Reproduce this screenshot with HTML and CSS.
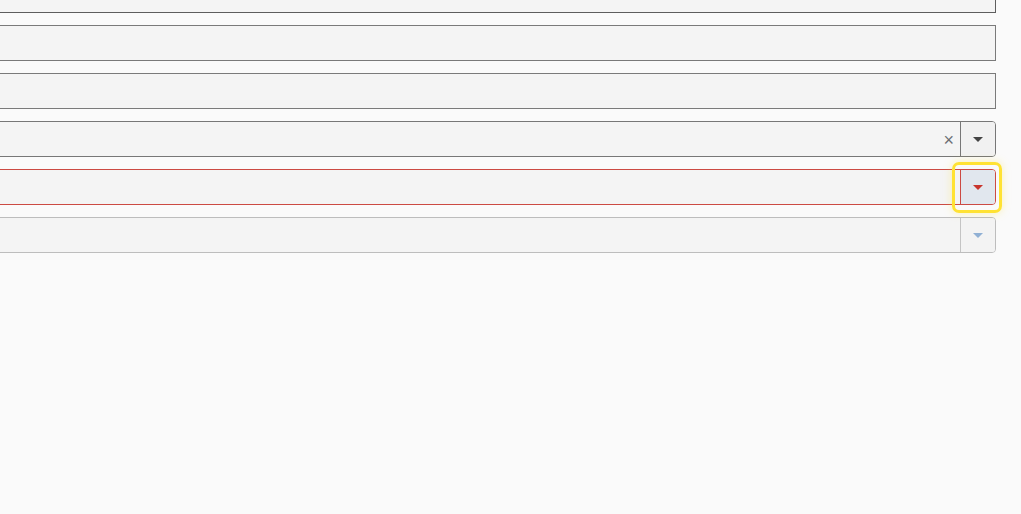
FILE: index.html
```html
<!DOCTYPE html>
<html lang="en">
<head>
  <meta charset="UTF-8">
  <title>Form fields</title>
  <link rel="stylesheet" href="styles.css">
</head>
<body>
  <div class="form">
    <div class="field dark"></div>
    <div class="field"></div>
    <div class="field"></div>

    <div class="combo">
      <div class="combo-input">
        <span class="clear">×</span>
      </div>
      <div class="combo-btn"><span class="arrow"></span></div>
    </div>

    <div class="combo error">
      <div class="combo-input"></div>
      <div class="combo-btn focused"><span class="arrow"></span></div>
    </div>

    <div class="combo disabled">
      <div class="combo-input"></div>
      <div class="combo-btn"><span class="arrow"></span></div>
    </div>
  </div>
</body>
</html>
```

FILE: styles.css
```css
body {
  font-family: "Liberation Sans", Arial, sans-serif;
  background: #fafafa;
  margin: 0;
  overflow: hidden;
}
.form {
  display: flex;
  flex-direction: column;
  gap: 12px;
  margin: -23px 25px 0 -20px;
}
.field {
  height: 36px;
  box-sizing: border-box;
  background: #f4f4f4;
  border: 1px solid #7a7a7a;
}
.field.dark {
  border-color: #5e5e5e;
}
.combo {
  display: flex;
  height: 36px;
  box-sizing: border-box;
  background: #f4f4f4;
  border: 1px solid #777;
  border-radius: 0 4px 4px 0;
}
.combo-input {
  flex: 1;
  display: flex;
  align-items: center;
  justify-content: flex-end;
  padding-right: 6px;
}
.clear {
  color: #6b6f75;
  font-size: 18px;
  line-height: 1;
  margin-top: 2px;
}
.combo-btn {
  position: relative;
  width: 34px;
  border-left: 1px solid #777;
  border-radius: 0 3px 3px 0;
  background: #f1f1f1;
  display: flex;
  align-items: center;
  justify-content: center;
}
.arrow {
  width: 0;
  height: 0;
  border-left: 5px solid transparent;
  border-right: 5px solid transparent;
  border-top: 5px solid #444;
}
.combo.error {
  border-color: #cc4a43;
}
.combo.error .combo-btn {
  border-left-color: #cc4a43;
  background: #e1e7ee;
}
.combo.error .arrow {
  border-top-color: #c8352d;
}
.combo-btn.focused::after {
  content: "";
  position: absolute;
  top: -8px;
  left: -9px;
  right: -7px;
  bottom: -9px;
  border: 3px solid #ffe233;
  border-radius: 7px;
  box-shadow: 0 0 8px rgba(255, 226, 51, 0.35);
}
.combo.disabled {
  border-color: #bdbdbd;
}
.combo.disabled .combo-btn {
  border-left-color: #c4c4c4;
  background: #f3f3f3;
}
.combo.disabled .arrow {
  border-top-color: #90b0d4;
}
```
